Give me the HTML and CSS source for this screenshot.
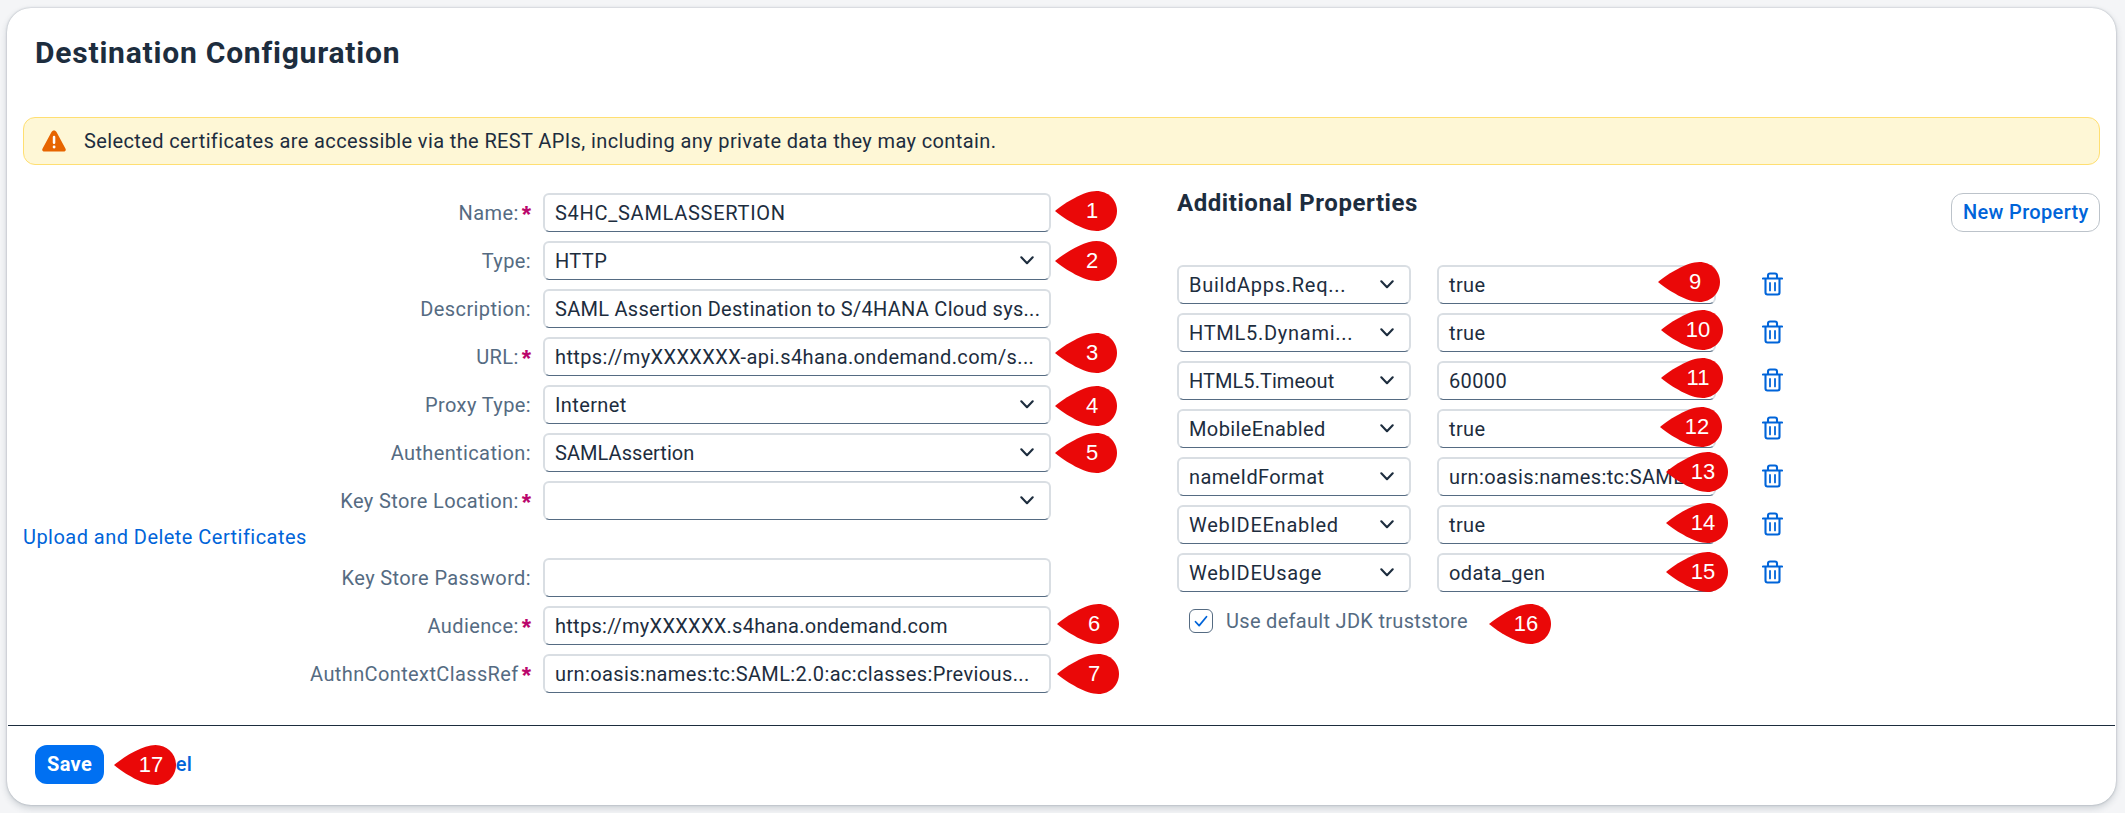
FILE: index.html
```html
<!DOCTYPE html>
<html lang="en">
<head>
<meta charset="utf-8">
<title>Destination Configuration</title>
<link rel="stylesheet" href="styles.css">
</head>
<body>
<svg class="defs" width="0" height="0">
  <symbol id="chevron" viewBox="0 0 14 9"><path d="M1.3 1.3 L7 7.2 L12.7 1.3" fill="none" stroke="currentColor" stroke-width="2.1" stroke-linecap="round" stroke-linejoin="round"/></symbol>
  <symbol id="trash" viewBox="0 0 21 24"><path d="M1 6.5H20M6 6V3.5Q6 1.5 8 1.5H13Q15 1.5 15 3.5V6M3.5 7V20.5Q3.5 22.5 5.5 22.5H15.5Q17.5 22.5 17.5 20.5V7" fill="none" stroke="currentColor" stroke-width="2.1" stroke-linecap="round"/><path d="M8 11V18.4M13 11V18.4" stroke="currentColor" stroke-width="1.8" stroke-linecap="round"/></symbol>
  <symbol id="pin" viewBox="0 0 62 40"><path d="M0 20C11 11 29 0 41.5 0C53 0 62 8.8 62 20S53 40 41.5 40C29 40 11 29 0 20Z" fill="#ea0808"/></symbol>
</svg>
<main class="card">
  <h1 class="title">Destination Configuration</h1>
  <div class="message">
    <svg class="warn" viewBox="0 0 24 22"><path d="M12 0.4C13.2 0.4 14 1 14.5 1.9L23.4 18.4C24.4 20.2 23.4 21.6 21.6 21.6H2.4C0.6 21.6 -0.4 20.2 0.6 18.4L9.5 1.9C10 1 10.8 0.4 12 0.4Z" fill="#e76500"/><rect x="10.8" y="5.8" width="2.5" height="8.2" rx="1.2" fill="#fff"/><rect x="10.7" y="15.6" width="2.8" height="2.8" rx="1.3" fill="#fff"/></svg>
    <span>Selected certificates are accessible via the REST APIs, including any private data they may contain.</span>
  </div>
  <div class="columns">
    <section class="form">
      <div class="row"><label class="label">Name:<b class="req">*</b></label><div class="field"><span class="caps">S4HC_SAMLASSERTION</span></div></div>
      <div class="row"><label class="label">Type:</label><div class="field"><span>HTTP</span><svg class="chev"><use href="#chevron"/></svg></div></div>
      <div class="row"><label class="label">Description:</label><div class="field"><span class="snug">SAML Assertion Destination to S/4HANA Cloud sys...</span></div></div>
      <div class="row"><label class="label">URL:<b class="req">*</b></label><div class="field"><span>https://myXXXXXXX-api.s4hana.ondemand.com/s...</span></div></div>
      <div class="row"><label class="label">Proxy Type:</label><div class="field"><span>Internet</span><svg class="chev"><use href="#chevron"/></svg></div></div>
      <div class="row"><label class="label">Authentication:</label><div class="field"><span class="tight">SAMLAssertion</span><svg class="chev"><use href="#chevron"/></svg></div></div>
      <div class="row"><label class="label">Key Store Location:<b class="req">*</b></label><div class="field"><span></span><svg class="chev"><use href="#chevron"/></svg></div></div>
      <a class="link">Upload and Delete Certificates</a>
      <div class="row"><label class="label">Key Store Password:</label><div class="field"></div></div>
      <div class="row"><label class="label">Audience:<b class="req">*</b></label><div class="field"><span class="snug">https://myXXXXXX.s4hana.ondemand.com</span></div></div>
      <div class="row"><label class="label">AuthnContextClassRef<b class="req">*</b></label><div class="field"><span>urn:oasis:names:tc:SAML:2.0:ac:classes:Previous...</span></div></div>
    </section>
    <section class="props">
      <header class="props-head"><h2 class="subtitle">Additional Properties</h2><button class="btn outline">New Property</button></header>
      <div class="prop"><div class="field key"><span class="caps">BuildApps.Req...</span><svg class="chev"><use href="#chevron"/></svg></div><div class="field val">true</div><svg class="trash"><use href="#trash"/></svg></div>
      <div class="prop"><div class="field key"><span class="caps">HTML5.Dynami...</span><svg class="chev"><use href="#chevron"/></svg></div><div class="field val">true</div><svg class="trash"><use href="#trash"/></svg></div>
      <div class="prop"><div class="field key"><span class="tight">HTML5.Timeout</span><svg class="chev"><use href="#chevron"/></svg></div><div class="field val">60000</div><svg class="trash"><use href="#trash"/></svg></div>
      <div class="prop"><div class="field key"><span>MobileEnabled</span><svg class="chev"><use href="#chevron"/></svg></div><div class="field val">true</div><svg class="trash"><use href="#trash"/></svg></div>
      <div class="prop"><div class="field key"><span>nameIdFormat</span><svg class="chev"><use href="#chevron"/></svg></div><div class="field val">urn:oasis:names:tc:SAML:...</div><svg class="trash"><use href="#trash"/></svg></div>
      <div class="prop"><div class="field key"><span class="caps">WebIDEEnabled</span><svg class="chev"><use href="#chevron"/></svg></div><div class="field val">true</div><svg class="trash"><use href="#trash"/></svg></div>
      <div class="prop"><div class="field key"><span class="caps">WebIDEUsage</span><svg class="chev"><use href="#chevron"/></svg></div><div class="field val">odata_gen</div><svg class="trash"><use href="#trash"/></svg></div>
      <label class="check"><span class="box"><svg viewBox="0 0 24 24"><path d="M6 12.8L10 17L18 7.4" fill="none" stroke="#0064d9" stroke-width="1.9" stroke-linecap="round" stroke-linejoin="round"/></svg></span>Use default JDK truststore</label>
    </section>
  </div>
  <footer class="footer"><button class="btn primary">Save</button><button class="btn plain">Cancel</button></footer>
</main>
<div class="pin p1"><svg><use href="#pin"/></svg><span>1</span></div>
<div class="pin p2"><svg><use href="#pin"/></svg><span>2</span></div>
<div class="pin p3"><svg><use href="#pin"/></svg><span>3</span></div>
<div class="pin p4"><svg><use href="#pin"/></svg><span>4</span></div>
<div class="pin p5"><svg><use href="#pin"/></svg><span>5</span></div>
<div class="pin p6"><svg><use href="#pin"/></svg><span>6</span></div>
<div class="pin p7"><svg><use href="#pin"/></svg><span>7</span></div>
<div class="pin p9"><svg><use href="#pin"/></svg><span>9</span></div>
<div class="pin p10"><svg><use href="#pin"/></svg><span>10</span></div>
<div class="pin p11"><svg><use href="#pin"/></svg><span>11</span></div>
<div class="pin p12"><svg><use href="#pin"/></svg><span>12</span></div>
<div class="pin p13"><svg><use href="#pin"/></svg><span>13</span></div>
<div class="pin p14"><svg><use href="#pin"/></svg><span>14</span></div>
<div class="pin p15"><svg><use href="#pin"/></svg><span>15</span></div>
<div class="pin p16"><svg><use href="#pin"/></svg><span>16</span></div>
<div class="pin p17"><svg><use href="#pin"/></svg><span>17</span></div>
</body>
</html>
```

FILE: styles.css
```css
* { box-sizing: border-box; }
body {
  position: relative;
  margin: 0;
  height: 813px;
  padding: 8px 9px 8px 7px;
  overflow: hidden;
  background: #f4f5f7;
  color: #1d2d3e;
  font: 20px/24px Roboto, "Liberation Sans", sans-serif;
  letter-spacing: .38px;
}
.defs { position: absolute; }
.card {
  display: flex;
  flex-direction: column;
  height: 797px;
  background: #fff;
  border-radius: 24px;
  box-shadow: 0 0 2px rgba(34, 53, 72, .35), 0 3px 7px rgba(34, 53, 72, .2);
}
.title {
  margin: 26px 0 0 28px;
  font-size: 30px;
  line-height: 38px;
  font-weight: 700;
  letter-spacing: .78px;
}
.message {
  display: flex;
  align-items: center;
  gap: 18px;
  height: 48px;
  margin: 45px 16px 0;
  padding: 0 18px;
  border: 1px solid #ffdf72;
  border-radius: 12px;
  background: #fef7d6;
}
.warn { width: 24px; height: 22px; }
.columns { display: flex; margin: 28px 16px 0; }
.form { display: flex; flex-direction: column; width: 1028px; gap: 9px; }
.row { display: flex; gap: 12px; height: 39px; }
.label {
  display: flex;
  justify-content: flex-end;
  align-items: center;
  width: 508px;
  color: #556b82;
}
.req { margin: 4px 0 0 3px; font: 700 24px/20px "Liberation Sans", Arial, sans-serif; color: #ba066c; letter-spacing: 0; }
.field {
  display: flex;
  align-items: center;
  justify-content: space-between;
  width: 508px;
  height: 39px;
  padding: 0 15px 0 10px;
  border: 2px solid #d9dee3;
  border-bottom: 1px solid #556b82;
  border-radius: 6px;
  background: #fff;
  white-space: nowrap;
  overflow: hidden;
}
.tight { letter-spacing: .05px; }
.snug { letter-spacing: .28px; }
.caps { letter-spacing: .72px; }
.chev { width: 14px; height: 9px; margin-bottom: 1px; }
.link { height: 20px; line-height: 17px; color: #0064d9; letter-spacing: .46px; }
.props { flex: 1; margin-left: 126px; }
.props-head { display: flex; justify-content: space-between; height: 72px; }
.subtitle { margin: -4px 0 0; font-size: 24px; line-height: 28px; font-weight: 700; letter-spacing: .56px; }
.prop { display: flex; align-items: center; margin-bottom: 9px; height: 39px; }
.key { width: 234px; padding: 0 15px 0 10px; }
.val { width: 279px; margin-left: 26px; padding-left: 10px; }
.trash { width: 21px; height: 24px; margin: -1px 0 0 46px; color: #0064d9; }
.check { display: flex; align-items: center; gap: 13px; padding: 8px 0 0 12px; color: #556b82; letter-spacing: .3px; }
.box { width: 24px; height: 24px; border: 1px solid #556b82; border-radius: 6px; display: flex; }
.box svg { width: 22px; height: 22px; }
.btn {
  height: 39px;
  padding: 0 11px;
  border: 1px solid transparent;
  border-radius: 12px;
  background: transparent;
  color: #0064d9;
  font: 500 20px/24px Roboto, "Liberation Sans", sans-serif;
  letter-spacing: .34px;
  white-space: nowrap;
}
.outline { width: 149px; padding-bottom: 1px; border-color: #bcc3ca; }
.primary { width: 69px; padding-bottom: 1px; background: #0070f2; color: #fff; font-weight: 700; }
.plain { padding-bottom: 1px; }
.footer {
  display: flex;
  gap: 13px;
  height: 80px;
  margin: auto 1px 0;
  padding: 19px 27px;
  border-top: 1px solid #1d2d3e;
}
.pin {
  position: absolute;
  width: 62px;
  height: 40px;
  color: #fff;
  font: 22px/40px "Liberation Sans", Arial, sans-serif;
  letter-spacing: 0;
  text-align: center;
}
.pin svg { position: absolute; left: 0; top: 0; width: 62px; height: 40px; }
.pin span { position: relative; left: 6px; }
.p1 { left: 1055px; top: 191px; }
.p2 { left: 1055px; top: 241px; }
.p3 { left: 1055px; top: 333px; }
.p4 { left: 1055px; top: 386px; }
.p5 { left: 1055px; top: 433px; }
.p6 { left: 1057px; top: 604px; }
.p7 { left: 1057px; top: 654px; }
.p9 { left: 1658px; top: 262px; }
.p10 { left: 1661px; top: 310px; }
.p11 { left: 1661px; top: 358px; }
.p12 { left: 1660px; top: 407px; }
.p13 { left: 1666px; top: 452px; }
.p14 { left: 1666px; top: 503px; }
.p15 { left: 1666px; top: 552px; }
.p16 { left: 1489px; top: 604px; }
.p17 { left: 114px; top: 745px; }
```
